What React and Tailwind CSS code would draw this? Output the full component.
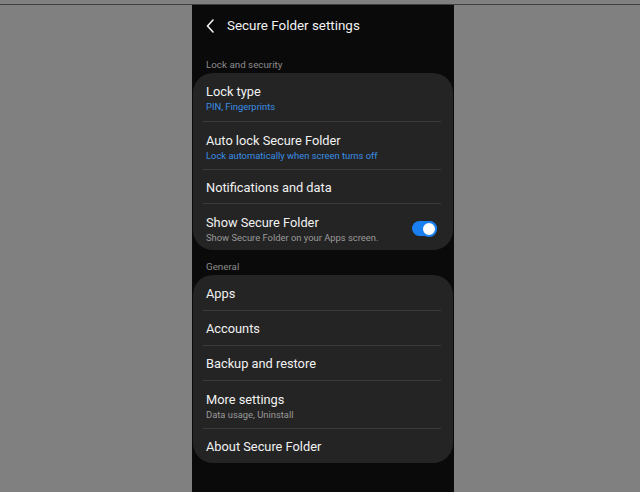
import React from 'react';

const font = { fontFamily: 'Roboto, "Noto Sans", sans-serif' };

const Divider = () => <div className="h-px ml-[10px] mr-[12px] bg-[#3a3a3a]" />;

const Row = ({ title, sub, blue, h, toggle }) => {
  if (!sub) {
    return (
      <div className={`${h} flex items-center px-[13px] pt-[2px]`}>
        <span className="text-[12.8px] leading-[16px] text-[#f1f1f1]">{title}</span>
      </div>
    );
  }
  return (
    <div className={`${h} flex items-start pl-[13px] pr-[16px] pt-[11px]`}>
      <div className="flex-1 min-w-0">
        <div className="text-[12.8px] leading-[16px] text-[#f1f1f1]">{title}</div>
        <div className={`text-[9.4px] leading-[12px] mt-[1px] ${blue ? 'text-[#3a8ee6]' : 'text-[#9a9a9a]'}`}>
          {sub}
        </div>
      </div>
      {toggle && (
        <div className="mt-[6px] relative w-[25px] h-[15px] rounded-full bg-[#1a7ff0]">
          <div className="absolute right-0 top-[-0.5px] w-[16px] h-[16px] rounded-full bg-white border-2 border-[#1a7ff0]" />
        </div>
      )}
    </div>
  );
};

const App = () => {
  return (
    <div className="w-[640px] h-[492px] bg-[#808080] flex flex-col overflow-hidden" style={font}>
      <div className="h-[4px] shrink-0" />
      <div className="h-px bg-[#3e3e3e] shrink-0" />
      <div className="flex flex-1">
        <div className="w-[192px]" />
        <div className="w-[262px] bg-[#0a0a0a] flex flex-col">
          {/* Header */}
          <div className="h-[38px] mt-[2px] flex items-center pl-[14px]">
            <svg width="9" height="14" viewBox="0 0 9 14" className="mr-[12px]">
              <path d="M7 1 L1.5 7 L7 13" fill="none" stroke="#f2f2f2" strokeWidth="1.6" strokeLinecap="round" strokeLinejoin="round" />
            </svg>
            <span className="text-[13.4px] text-[#f2f2f2]">Secure Folder settings</span>
          </div>

          {/* Lock and security */}
          <div className="mt-[13px] mb-[1px] pl-[14px] text-[9.8px] leading-[14px] text-[#8c8c8c]">Lock and security</div>
          <div className="mx-px rounded-[20px] bg-[#242424]">
            <Row h="h-[48px]" title="Lock type" sub="PIN, Fingerprints" blue />
            <Divider />
            <Row h="h-[47px]" title="Auto lock Secure Folder" sub="Lock automatically when screen turns off" blue />
            <Divider />
            <Row h="h-[33px]" title="Notifications and data" />
            <Divider />
            <Row h="h-[46px]" title="Show Secure Folder" sub="Show Secure Folder on your Apps screen." toggle />
          </div>

          {/* General */}
          <div className="mt-[10px] mb-[1px] pl-[14px] text-[9.8px] leading-[14px] text-[#8c8c8c]">General</div>
          <div className="mx-px rounded-[20px] bg-[#242424]">
            <Row h="h-[35px]" title="Apps" />
            <Divider />
            <Row h="h-[34px]" title="Accounts" />
            <Divider />
            <Row h="h-[34px]" title="Backup and restore" />
            <Divider />
            <Row h="h-[47px]" title="More settings" sub="Data usage, Uninstall" />
            <Divider />
            <Row h="h-[34px]" title="About Secure Folder" />
          </div>
        </div>
      </div>
    </div>
  );
};

export default App;
